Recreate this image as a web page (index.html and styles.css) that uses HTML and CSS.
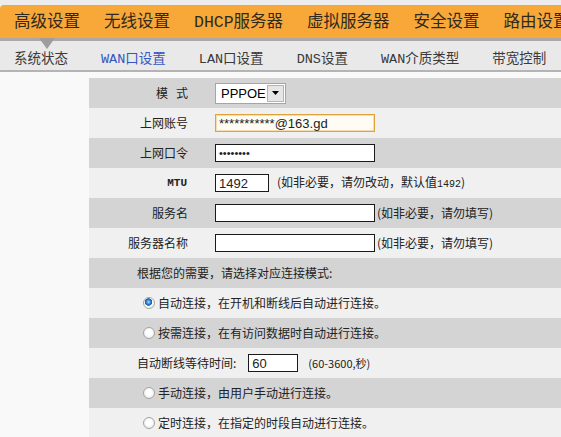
FILE: index.html
```html
<!DOCTYPE html>
<html lang="zh-CN">
<head>
<meta charset="utf-8">
<title>WAN口设置</title>
<link rel="stylesheet" href="styles.css">
</head>
<body>
<header class="top">
  <nav class="nav">
    <span class="nav-item active">高级设置</span>
    <span class="nav-item">无线设置</span>
    <span class="nav-item">DHCP服务器</span>
    <span class="nav-item">虚拟服务器</span>
    <span class="nav-item">安全设置</span>
    <span class="nav-item">路由设置</span>
  </nav>
  <div class="nav-rule"></div>
  <nav class="subnav">
    <span class="sub-item">系统状态</span>
    <span class="sub-item current">WAN口设置</span>
    <span class="sub-item">LAN口设置</span>
    <span class="sub-item">DNS设置</span>
    <span class="sub-item">WAN介质类型</span>
    <span class="sub-item">带宽控制</span>
  </nav>
</header>
<main class="content">
  <div class="form">
    <div class="row dark">
      <div class="label">模&nbsp;&nbsp;&nbsp;式</div>
      <div class="field">
        <div class="select"><span class="select-text">PPPOE</span><span class="select-btn"><svg width="7" height="4" viewBox="0 0 7 4"><path d="M0 0H7L3.5 4Z" fill="#000"/></svg></span></div>
      </div>
    </div>
    <div class="row light">
      <div class="label">上网账号</div>
      <div class="field"><input class="text focus" type="text" value="***********@163.gd"></div>
    </div>
    <div class="row dark">
      <div class="label">上网口令</div>
      <div class="field"><input class="text pass" type="password" value="12345678"></div>
    </div>
    <div class="row light">
      <div class="label mono">MTU</div>
      <div class="field"><input class="text short" type="text" value="1492"><span class="hint">(如非必要，请勿改动，默认值<span class="num">1492</span>)</span></div>
    </div>
    <div class="row dark">
      <div class="label">服务名</div>
      <div class="field"><input class="text" type="text" value=""><span class="hint tight">(如非必要，请勿填写)</span></div>
    </div>
    <div class="row light">
      <div class="label">服务器名称</div>
      <div class="field"><input class="text" type="text" value=""><span class="hint tight">(如非必要，请勿填写)</span></div>
    </div>
    <div class="row dark wide">根据您的需要，请选择对应连接模式:</div>
    <div class="row light wide radio-row"><input class="radio" type="radio" name="mode" checked><span>自动连接，在开机和断线后自动进行连接。</span></div>
    <div class="row dark wide radio-row"><input class="radio" type="radio" name="mode"><span>按需连接，在有访问数据时自动进行连接。</span></div>
    <div class="row light wide"><span class="wait-label">自动断线等待时间:</span><input class="text wait" type="text" value="60"><span class="hint small">(60-3600,秒)</span></div>
    <div class="row dark wide radio-row"><input class="radio" type="radio" name="mode"><span>手动连接，由用户手动进行连接。</span></div>
    <div class="row light wide radio-row"><input class="radio" type="radio" name="mode"><span>定时连接，在指定的时段自动进行连接。</span></div>
  </div>
</main>
</body>
</html>
```

FILE: styles.css
```css
html, body {
  margin: 0;
  padding: 0;
  overflow: hidden;
  background: #f9f9f9;
  font-family: "Noto Sans CJK SC", "Liberation Sans", sans-serif;
  color: #222;
}

.top {
  padding-top: 5px;
  background: #ececec;
}

.nav {
  display: flex;
  box-sizing: border-box;
  height: 33px;
  padding: 3px 0 0 14px;
  gap: 24px;
  background: #f8a838;
  border-radius: 4px 0 0 0;
  white-space: nowrap;
  font-family: "Liberation Mono", "DejaVu Sans Mono", "Noto Sans CJK SC", monospace;
  font-size: 16.5px;
  color: #31281c;
  position: relative;
  z-index: 2;
}

.nav-item {
  flex-shrink: 0;
  display: flex;
  align-items: center;
  position: relative;
  line-height: 1;
}

.nav-item.active::after {
  content: "";
  position: absolute;
  top: 100%;
  left: 50%;
  margin-left: -8px;
  border-top: 11px solid #9d9d9d;
  border-left: 8px solid transparent;
  border-right: 8px solid transparent;
}

.nav-rule {
  height: 3px;
  background: #a9a9a9;
}

.subnav {
  display: flex;
  box-sizing: border-box;
  height: 31px;
  align-items: center;
  padding: 9px 0 0 14px;
  gap: 33px;
  background: #e9e9e9;
  border-bottom: 2px solid #b4b4b4;
  white-space: nowrap;
  font-family: "Liberation Mono", "DejaVu Sans Mono", "Noto Sans CJK SC", monospace;
  font-size: 13.5px;
  color: #3a3a3a;
  line-height: 1;
}

.sub-item {
  flex-shrink: 0;
}

.sub-item.current {
  color: #3556c0;
}

.content {
  padding: 6px 0 0 89px;
  background: #f9f9f9;
}

.form {
  font-size: 12px;
  line-height: 1;
}

.row {
  display: grid;
  grid-template-columns: 111px 1fr;
  align-items: center;
  height: 30px;
  white-space: nowrap;
}

.row.dark {
  background: #d4d4d4;
}

.row.light {
  background: #f0f0f0;
}

.row.wide {
  display: flex;
  padding-left: 48px;
}

.row.radio-row {
  padding-left: 54px;
}

.label {
  text-align: right;
  padding-right: 12px;
  color: #222;
}

.label.mono {
  font-family: "Liberation Mono", monospace;
  font-weight: bold;
  font-size: 11px;
  padding-right: 13px;
}

.field {
  display: flex;
  align-items: center;
  padding-left: 15px;
}

.select {
  display: flex;
  align-items: center;
  width: 71px;
  height: 21px;
  box-sizing: border-box;
  border: 1px solid #a5a5a5;
  background: #fff;
}

.select-text {
  flex: 1;
  padding-left: 5px;
  font-family: "Liberation Sans", sans-serif;
  font-size: 13px;
  color: #000;
}

.select-btn {
  width: 17px;
  height: 17px;
  margin-right: 1px;
  box-sizing: border-box;
  border: 1px solid #b5b5b5;
  background: #e6e6e6;
  display: flex;
  align-items: center;
  justify-content: center;
}

.text {
  box-sizing: border-box;
  width: 160px;
  height: 18px;
  margin: 0;
  padding: 0 3px;
  border: 1px solid #1a1a1a;
  background: #fff;
  font-family: "Liberation Sans", sans-serif;
  font-size: 13px;
  color: #222;
  outline: none;
}

.text.focus {
  border-color: #e0a23a;
  background: #fffdf3;
  box-shadow: inset 0 0 0 1px #f6dcae;
}

.text.pass {
  font-size: 11px;
  letter-spacing: 0;
}

.text.short {
  width: 54px;
}

.text.wait {
  width: 50px;
  margin-left: 12px;
}

.hint {
  margin-left: 8px;
  color: #222;
}

.hint.tight {
  margin-left: 2px;
}

.hint.small {
  margin-left: 10px;
  font-size: 11px;
}

.num {
  font-family: "Liberation Mono", monospace;
  font-size: 10px;
}

.wait-label {
  color: #222;
}

.radio {
  appearance: none;
  -webkit-appearance: none;
  width: 12px;
  height: 12px;
  margin: 0 3px 0 0;
  border-radius: 50%;
  border: 1px solid #a4a4a4;
  background: radial-gradient(circle at 50% 45%, #ffffff 35%, #dedede 100%);
  flex-shrink: 0;
}

.radio:checked {
  background: radial-gradient(circle at 45% 40%, #a8dcff 0, #2a7fd0 28%, #1a5ea8 42%, #ffffff 50%, #f4f4f4 70%, #d6d6d6 100%);
}
```
